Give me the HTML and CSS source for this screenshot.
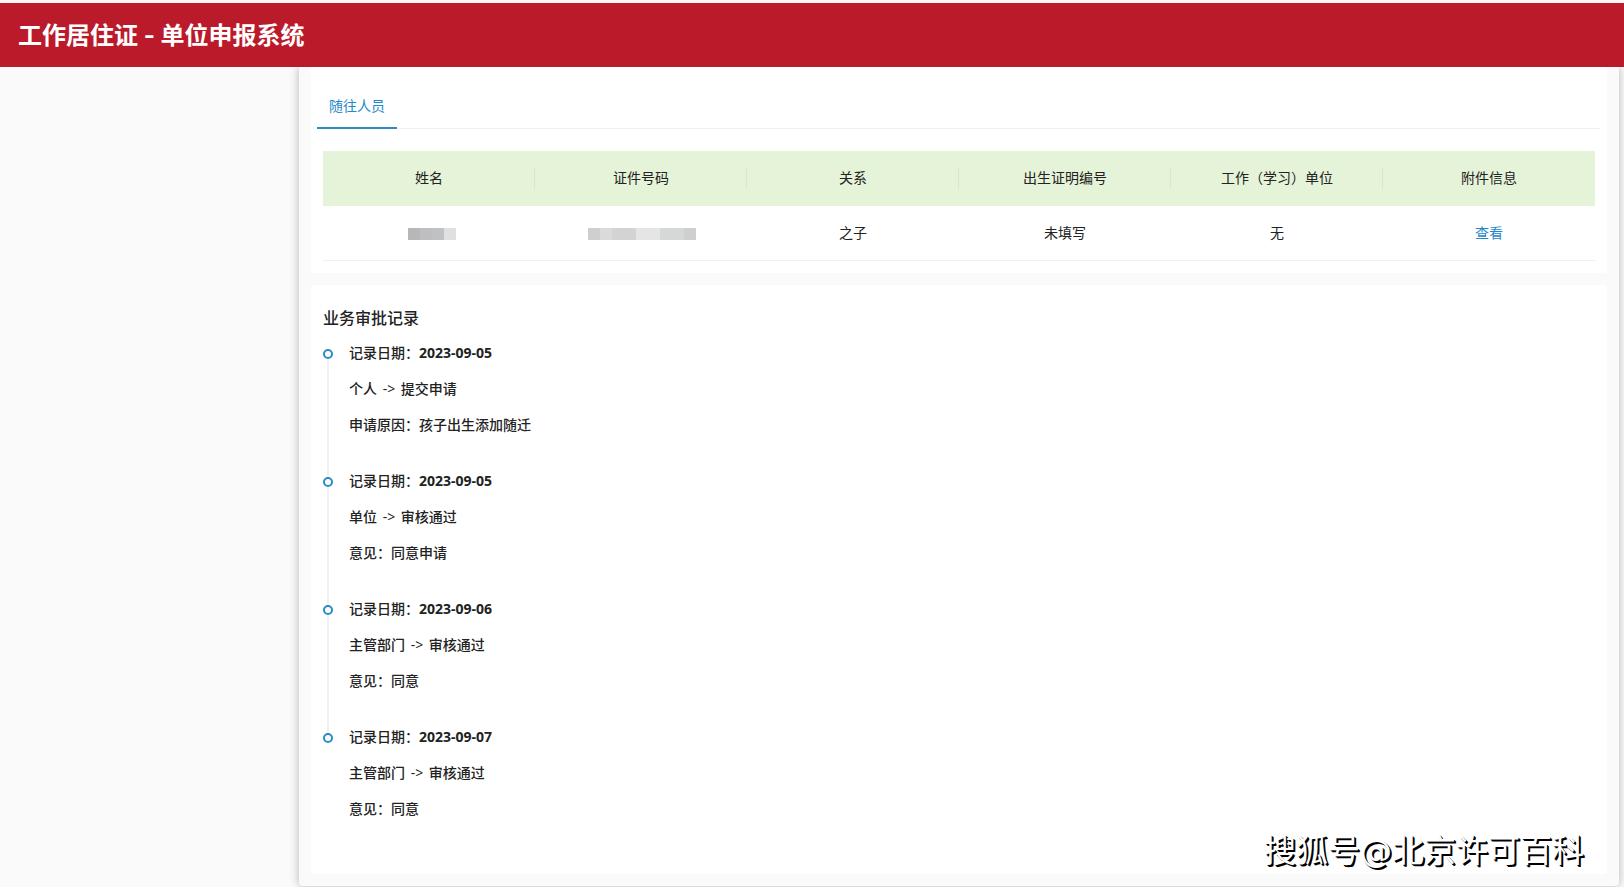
FILE: index.html
```html
<!DOCTYPE html>
<html lang="zh-CN">
<head>
<meta charset="utf-8">
<title>工作居住证 - 单位申报系统</title>
<link rel="stylesheet" href="styles.css">
</head>
<body>
<header class="header"><h1 class="header-title">工作居住证 - 单位申报系统</h1></header>
<div class="layout">
  <aside class="sidebar"></aside>
  <main class="panel">
    <section class="card card-people">
      <div class="tabs" role="tablist">
        <button class="tab" type="button" role="tab" aria-selected="true">随往人员</button>
      </div>
      <table class="table">
        <thead>
          <tr><th>姓名</th><th>证件号码</th><th>关系</th><th>出生证明编号</th><th>工作（学习）单位</th><th>附件信息</th></tr>
        </thead>
        <tbody>
          <tr>
            <td><span class="mask mask-name"></span></td>
            <td><span class="mask mask-id"></span></td>
            <td>之子</td><td>未填写</td><td>无</td>
            <td><a class="link" href="#">查看</a></td>
          </tr>
        </tbody>
      </table>
    </section>
    <section class="card card-records">
      <h2 class="card-title">业务审批记录</h2>
      <ol class="timeline">
        <li class="record"><p>记录日期：<time>2023-09-05</time></p><p>个人 <span class="arrow">-&gt;</span> 提交申请</p><p>申请原因：孩子出生添加随迁</p></li>
        <li class="record"><p>记录日期：<time>2023-09-05</time></p><p>单位 <span class="arrow">-&gt;</span> 审核通过</p><p>意见：同意申请</p></li>
        <li class="record"><p>记录日期：<time>2023-09-06</time></p><p>主管部门 <span class="arrow">-&gt;</span> 审核通过</p><p>意见：同意</p></li>
        <li class="record"><p>记录日期：<time>2023-09-07</time></p><p>主管部门 <span class="arrow">-&gt;</span> 审核通过</p><p>意见：同意</p></li>
      </ol>
    </section>
  </main>
</div>
<div class="watermark">搜狐号@北京许可百科</div>
</body>
</html>
```

FILE: styles.css
```css
*, *::before, *::after { box-sizing: border-box; }
body {
  margin: 0;
  min-height: 100vh;
  display: flex;
  flex-direction: column;
  position: relative;
  background: #fafafa;
  color: #222;
  font: 14px/22px "Open Sans", "Noto Sans CJK SC", sans-serif;
}
h1, h2, p, ol { margin: 0; padding: 0; }
.header {
  position: relative;
  z-index: 1;
  height: 67px;
  padding: 2px 0 0 18px;
  display: flex;
  align-items: center;
  border-top: 3px solid #fdf5f6;
  background: #bb1a2b;
  color: #fff;
}
.header-title {
  font: 700 24px/36px Inter, "Noto Sans CJK SC", sans-serif;
}
.layout { flex: 1; display: flex; }
.sidebar { flex: 0 0 299px; }
.panel {
  flex: 1;
  margin: 0 5px 1px 0;
  padding: 0 12px 12px;
  display: flex;
  flex-direction: column;
  gap: 12px;
  background: #fafafa;
  border-radius: 0 0 4px 4px;
  box-shadow: 0 0 10px rgba(0, 0, 0, 0.28);
}
.card { background: #fff; border-radius: 3px; }
.card-people { padding: 16px 7px 12px 6px; }
.tabs { display: flex; border-bottom: 1px solid #f0f0f0; }
.tab {
  margin-bottom: -1px;
  padding: 12px 12px 10px;
  border: 0;
  border-bottom: 2px solid #2b8fbd;
  background: none;
  color: #1f88ca;
  font: inherit;
}
.table {
  width: calc(100% - 11px);
  margin: 22px 5px 0 6px;
  border-collapse: separate;
  border-spacing: 0;
  table-layout: fixed;
  text-align: center;
}
.table th, .table td { padding: 16px 0; font-weight: 400; }
.table th { background: #e5f3d8; border-bottom: 1px solid #e5f3d8; position: relative; }
.table th:not(:last-child)::after {
  content: "";
  position: absolute;
  top: 16px;
  right: 0;
  width: 1px;
  height: 22px;
  background: #d8e6cd;
}
.table td { border-bottom: 1px solid #f0f0f0; }
.mask { display: inline-block; height: 12px; margin: 6px 0 4px; vertical-align: top; }
.mask-name {
  width: 48px;
  margin-left: 6px;
  background: linear-gradient(90deg, #b8b6b8 0 12px, #bebdbf 12px 24px, #c0c1c3 24px 36px, #e0e0e2 36px);
}
.mask-id {
  width: 108px;
  margin-left: 2px;
  background: linear-gradient(90deg, #cfcfd0 0 12px, #dadadb 12px 24px, #d3d3d4 24px 48px, #e5e5e6 48px 72px, #d6d7d7 72px 96px, #cecfcf 96px);
}
.link { color: #1f88ca; text-decoration: none; }
.card-records { flex: 1; padding: 21px 12px 40px; }
.card-title { font-size: 16px; line-height: 24px; font-weight: 500; }
.timeline { margin-top: 12px; list-style: none; font-weight: 500; }
.timeline time { font-weight: 700; }
.arrow { margin: 0 2px; }
.record {
  position: relative;
  padding: 0 0 34px 26px;
  display: flex;
  flex-direction: column;
  gap: 14px;
}
.record::before {
  content: "";
  position: absolute;
  top: 7px;
  left: 0;
  z-index: 1;
  width: 10px;
  height: 10px;
  border: 2px solid #2d8cc4;
  border-radius: 50%;
  background: #fff;
}
.record:not(:last-child)::after {
  content: "";
  position: absolute;
  top: 17px;
  bottom: -7px;
  left: 4px;
  width: 2px;
  background: #f0f0f0;
}
.record:last-child { padding-bottom: 0; }
.watermark {
  position: absolute;
  right: 40px;
  bottom: 12px;
  z-index: 2;
  color: #fff;
  font: 32px/48px "DejaVu Sans", "Noto Sans CJK SC", sans-serif;
  text-shadow: 1px 1px 0 #000, 2px 2px 0 #000;
}
```
